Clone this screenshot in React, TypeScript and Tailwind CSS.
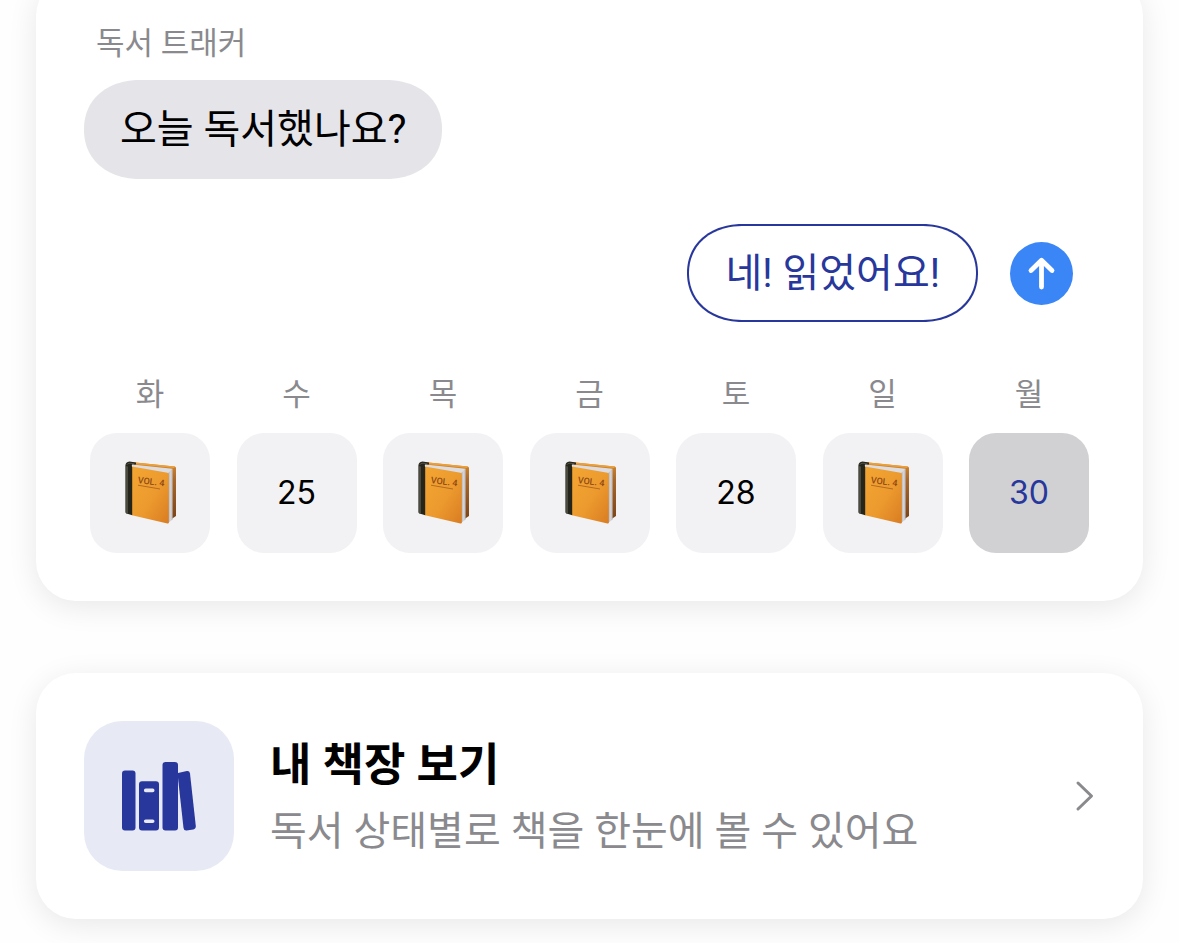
const week = [
  { label: "화", date: 24, read: true },
  { label: "수", date: 25, read: false },
  { label: "목", date: 26, read: true },
  { label: "금", date: 27, read: true },
  { label: "토", date: 28, read: false },
  { label: "일", date: 29, read: true },
  { label: "월", date: 30, read: false, today: true },
];

function OrangeBook() {
  return (
    <svg viewBox="0 0 52 66" className="h-[66px] w-[52px]" aria-hidden="true">
      <defs>
        <linearGradient id="cover" x1="0" y1="0" x2="1" y2="1">
          <stop offset="0" stopColor="#f3a632" />
          <stop offset="0.55" stopColor="#ec9a2e" />
          <stop offset="1" stopColor="#d97c22" />
        </linearGradient>
        <linearGradient id="back" x1="0" y1="0" x2="0" y2="1">
          <stop offset="0" stopColor="#d88a2c" />
          <stop offset="0.3" stopColor="#a9682a" />
          <stop offset="1" stopColor="#7a4216" />
        </linearGradient>
        <linearGradient id="pages" x1="0" y1="0" x2="1" y2="0">
          <stop offset="0" stopColor="#a9a6a8" />
          <stop offset="0.5" stopColor="#d6d5d8" />
          <stop offset="1" stopColor="#bdbbbf" />
        </linearGradient>
      </defs>
      <path d="M9 2.200 L50.600 6.400 Q52 6.700 52 8.200 V56 L46 60 V12 L10 5z" fill="url(#back)" />
      <path d="M9 2.200 L51 6.400 L50 8 L12 4.200z" fill="#eda038" />
      <path d="M8 4.600 L48.600 8.800 L44.500 14 L9 7.400z" fill="#dddce0" />
      <path d="M44 13.200 L48.600 8.800 V59.600 L44 63z" fill="url(#pages)" />
      <path d="M8 6.400 L43.400 12.800 Q44.800 13.100 44.800 14.400 V62.400 Q44.800 63.800 43.400 63.400 L8 55.200z" fill="url(#cover)" />
      <path d="M1.400 5.600 Q1.500 2 5.500 1.600 L12 2.400 V4.600 L8.400 4.600 Q7.400 5 8.200 7.200 V55.200 L2.600 53.600 Q1.400 53.200 1.400 52z" fill="#26251b" />
      <path d="M2 6 L4 6.400 V53.800 L2 53.200z" fill="#4b4a3e" />
      <path d="M2.600 5 Q3.400 3.200 6 3.200 L10.400 3.800" fill="none" stroke="#666358" strokeWidth="0.7" />
      <text x="13.500" y="23" transform="rotate(7 13 23)" fill="#8f4914" fontSize="9" fontWeight="500" className="font-['Roboto',sans-serif]">
        VOL. 4
      </text>
      <path d="M14 25.200 L36 29" stroke="#a65c1c" strokeWidth="1" strokeOpacity="0.8" />
    </svg>
  );
}

function BooksIcon() {
  return (
    <svg viewBox="0 0 76 72" className="h-[72px] w-[76px]" fill="#28379b" aria-hidden="true">
      <rect x="1" y="10.500" width="13.500" height="60" rx="3" />
      <path
        fillRule="evenodd"
        d="M21 21.200h14a3 3 0 0 1 3 3v43.300a3 3 0 0 1-3 3H21a3 3 0 0 1-3-3V24.200a3 3 0 0 1 3-3zM24.700 28.600a1.800 1.800 0 0 0 0 3.600h7a1.800 1.800 0 0 0 0-3.600zM24.700 59.500a1.800 1.800 0 0 0 0 3.600h7a1.800 1.800 0 0 0 0-3.600z"
      />
      <rect x="41.500" y="2" width="15.500" height="68.500" rx="3" />
      <path d="M57 12.900 L65.800 11.100 Q68.600 10.700 69 13.500 L74.800 66.100 Q75 68.900 72.300 69.500 L65.600 70.500 Q62.900 70.800 62.500 68 L57 18z" />
    </svg>
  );
}

export default function App() {
  return (
    <main className="flex min-h-screen flex-col gap-[72px] overflow-hidden bg-[#fefefe] px-9 pb-6 font-['Roboto','Noto_Sans_CJK_KR',sans-serif]">
      <section className="-mt-6 flex flex-col rounded-[40px] bg-white px-12 pt-[46px] pb-12 shadow-[0_6px_30px_rgba(0,0,0,0.09)]">
        <h2 className="px-3 text-[31px] leading-[44px] text-[#8a8a8e]">독서 트래커</h2>
        <p className="mt-[14px] self-start rounded-[56px_/_49px] bg-[#e5e4e9] px-9 pt-[26px] pb-[25px] text-[40px] leading-[48px] text-black [corner-shape:superellipse(1.1)]">
          오늘 독서했나요?
        </p>
        <div className="mt-[45px] flex items-center justify-end gap-8 pr-[22px]">
          <button type="button" className="rounded-[56px_/_49px] border-2 border-[#28379b] px-9 pt-6 pb-[22px] text-[40px] leading-[48px] text-[#28379b] [corner-shape:superellipse(1.1)]">
            네! 읽었어요!
          </button>
          <button type="button" aria-label="보내기" className="flex size-[63px] items-center justify-center rounded-full bg-[#3a86f7]">
            <svg viewBox="0 0 63 63" className="size-full" fill="none" stroke="#fff" strokeWidth="4.800" strokeLinecap="round" strokeLinejoin="round" aria-hidden="true">
              <path d="M31.500 45V19M21 28.500 L31.500 18.300 L42 28.500" />
            </svg>
          </button>
        </div>
        <ul className="mt-[51px] flex justify-between px-[6px]">
          {week.map((day) => (
            <li key={day.label} className="flex flex-col items-center gap-4">
              <span className="text-[31px] leading-[44px] text-[#8a8a8e]">{day.label}</span>
              <span
                className={
                  day.today
                    ? "flex size-[120px] items-center justify-center rounded-[27px] bg-[#d1d1d4] font-['Inter',sans-serif] text-[32px] text-[#28379b]"
                    : "flex size-[120px] items-center justify-center rounded-[27px] bg-[#f2f2f5] font-['Inter',sans-serif] text-[32px] text-black"
                }
              >
                {day.read ? <OrangeBook /> : day.date}
              </span>
            </li>
          ))}
        </ul>
      </section>

      <a href="#bookshelf" className="flex items-center rounded-[40px] bg-white p-12 shadow-[0_6px_30px_rgba(0,0,0,0.09)]">
        <span className="flex size-[150px] shrink-0 items-center justify-center rounded-[38px] bg-[#e7eaf4]">
          <BooksIcon />
        </span>
        <span className="ml-9 flex flex-1 flex-col gap-2 pt-[3px]">
          <span className="text-[45px] leading-[60px] font-bold text-black">내 책장 보기</span>
          <span className="text-[40px] leading-[56px] text-[#8a8a8e]">독서 상태별로 책을 한눈에 볼 수 있어요</span>
        </span>
        <svg viewBox="0 0 20 32" className="h-8 w-5 shrink-0" fill="none" stroke="#8a8a8e" strokeWidth="3" strokeLinecap="round" strokeLinejoin="round" aria-hidden="true">
          <path d="M3 3 L16.500 16 L3 29" />
        </svg>
      </a>
    </main>
  );
}
